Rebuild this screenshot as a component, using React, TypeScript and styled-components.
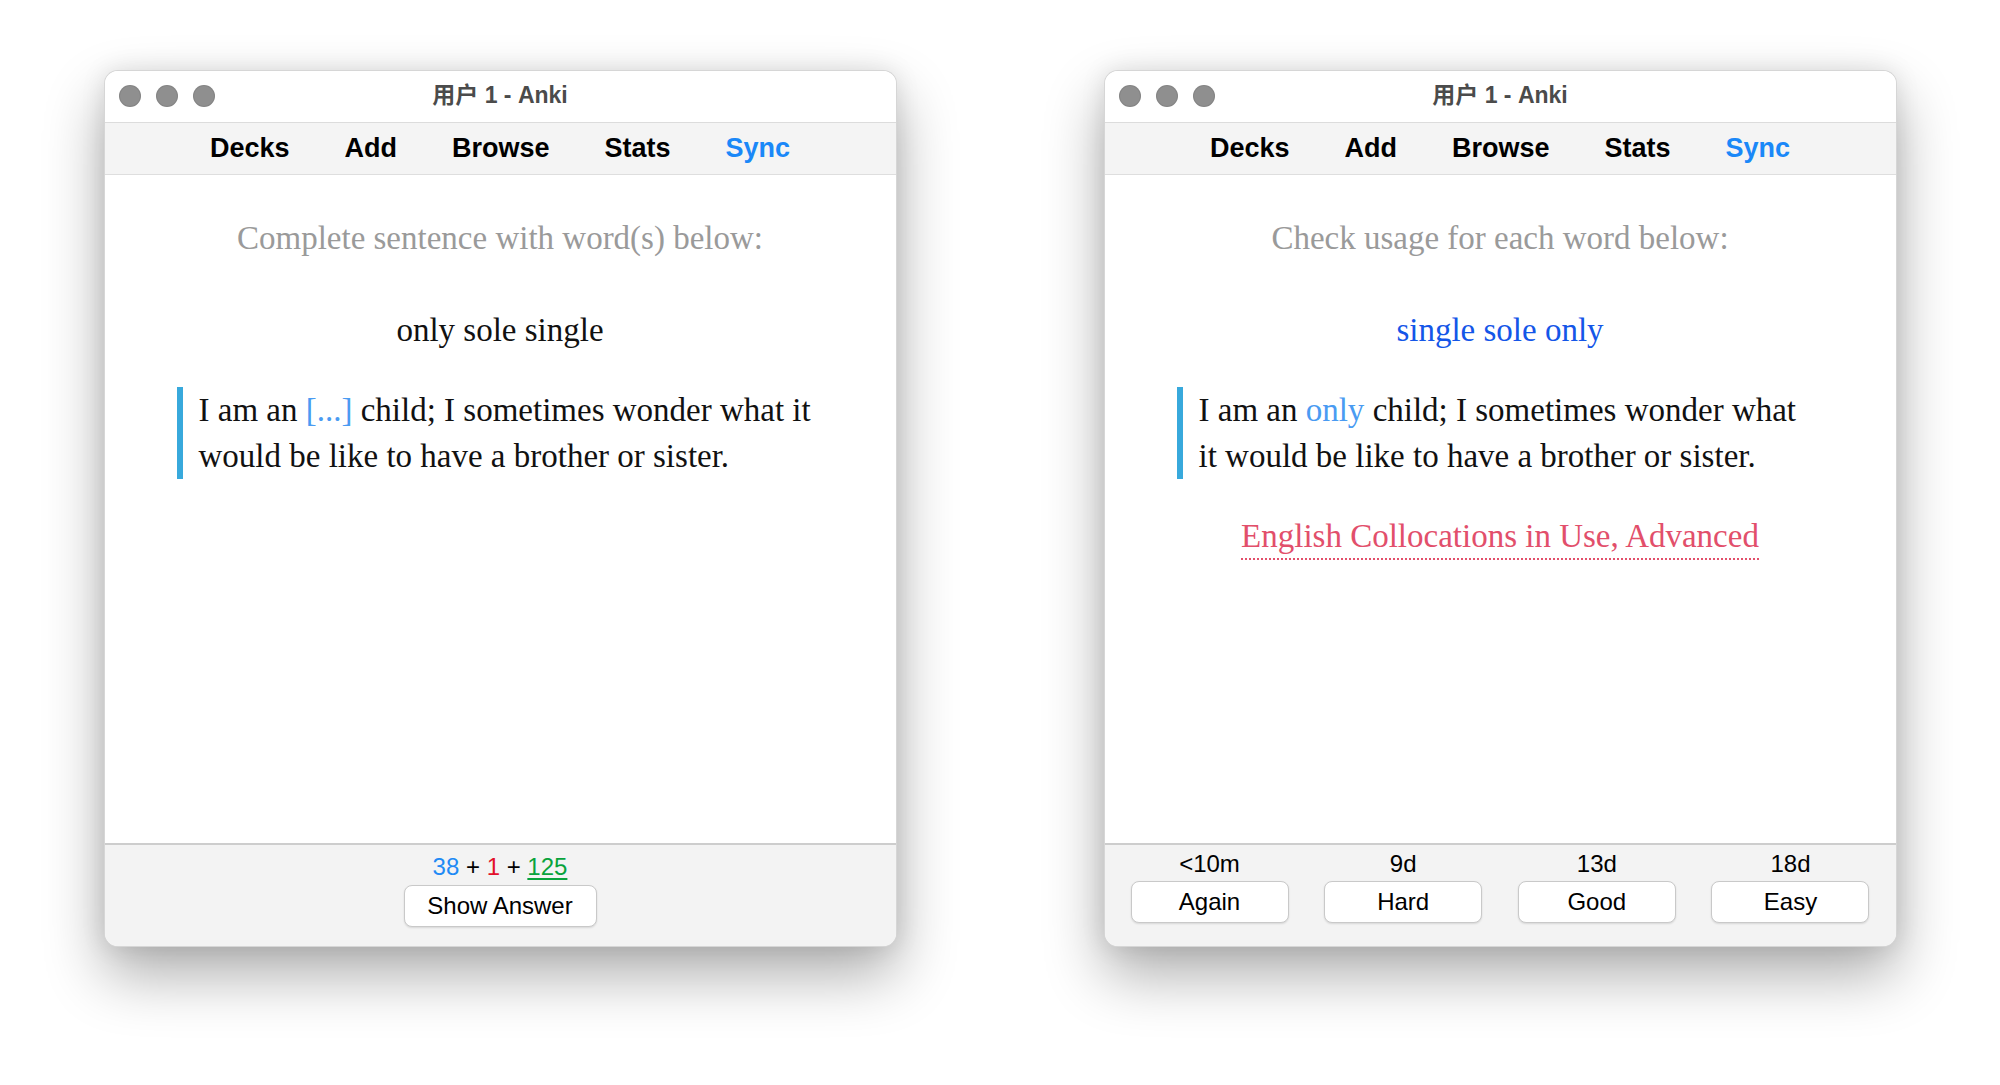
import React from "react";
import styled, { createGlobalStyle } from "styled-components";

const GlobalStyle = createGlobalStyle`
  html, body {
    margin: 0;
    padding: 0;
    background: #ffffff;
  }
  body {
    font-family: "Liberation Sans", Arial, sans-serif;
  }
`;

const Page = styled.div`
  width: 2000px;
  height: 1085px;
  box-sizing: border-box;
  padding-top: 70px;
  display: flex;
  justify-content: center;
  align-items: flex-start;
  gap: 207px;
  overflow: hidden;
`;

const Window = styled.div`
  width: 793px;
  height: 877px;
  box-sizing: border-box;
  display: flex;
  flex-direction: column;
  border-radius: 14px;
  overflow: hidden;
  background: #ffffff;
  border: 1px solid rgba(0, 0, 0, 0.16);
  box-shadow: 0 28px 60px rgba(0, 0, 0, 0.32), 0 0 24px rgba(0, 0, 0, 0.1);
`;

const TitleBar = styled.div`
  position: relative;
  height: 51px;
  flex: none;
  display: flex;
  align-items: center;
  justify-content: center;
  background: #ffffff;
  border-bottom: 1px solid #dcdcdc;
`;

const Lights = styled.div`
  position: absolute;
  left: 14px;
  top: 14px;
  display: flex;
  gap: 15px;
`;

const Light = styled.span`
  width: 22px;
  height: 22px;
  border-radius: 50%;
  background: #8f8f8f;
  box-shadow: inset 0 0 0 1px rgba(0, 0, 0, 0.08);
`;

const Title = styled.div`
  font-family: "Liberation Sans", "Noto Sans CJK SC", sans-serif;
  font-size: 23px;
  line-height: 28px;
  margin-bottom: 4px;
  font-weight: 700;
  color: #4b4b4b;
`;

const Toolbar = styled.nav`
  height: 51px;
  flex: none;
  display: flex;
  align-items: center;
  justify-content: center;
  gap: 55px;
  background: #f4f4f4;
  border-bottom: 1px solid #dedede;
`;

const NavItem = styled.span<{ $active?: boolean }>`
  font-family: "Liberation Sans", Arial, sans-serif;
  font-weight: 700;
  font-size: 27px;
  color: ${(p) => (p.$active ? "#1a88f8" : "#000000")};
`;

const Content = styled.main`
  flex: 1;
  display: flex;
  flex-direction: column;
  align-items: center;
  padding-top: 40px;
  font-family: "Liberation Serif", "Times New Roman", serif;
  font-size: 33px;
  line-height: 46px;
  color: #111111;
`;

const Prompt = styled.div`
  color: #9a9a9a;
  text-align: center;
`;

const Words = styled.div<{ $answer?: boolean }>`
  margin-top: 46px;
  color: ${(p) => (p.$answer ? "#1456e8" : "#111111")};
`;

const Quote = styled.blockquote`
  align-self: stretch;
  margin: 34px 0 0 72px;
  width: 640px;
  box-sizing: border-box;
  border-left: 6px solid #38a9dc;
  padding-left: 16px;
`;

const Cloze = styled.span`
  color: #4a9bf2;
`;

const Source = styled.div`
  margin-top: 35px;
  color: #e24f6b;
  border-bottom: 2px dotted #e24f6b;
  line-height: 44px;
`;

const BottomBar = styled.footer`
  height: 103px;
  flex: none;
  box-sizing: border-box;
  background: #f3f3f3;
  border-top: 2px solid #cdcdcd;
  display: flex;
  flex-direction: column;
  align-items: center;
`;

const Counts = styled.div`
  margin-top: 7px;
  font-size: 24px;
  line-height: 30px;
  color: #000;
`;

const Count = styled.span<{ $color: string; $underline?: boolean }>`
  color: ${(p) => p.$color};
  text-decoration: ${(p) => (p.$underline ? "underline" : "none")};
  text-underline-offset: 3px;
`;

const Button = styled.button`
  box-sizing: border-box;
  height: 42px;
  padding: 0 22px;
  font-family: "Liberation Sans", Arial, sans-serif;
  font-size: 24px;
  color: #000;
  background: #ffffff;
  border: 1px solid #c9c9c9;
  border-radius: 8px;
  box-shadow: 0 1px 2px rgba(0, 0, 0, 0.12);
`;

const ShowButton = styled(Button)`
  margin-top: 3px;
  width: 193px;
`;

const EaseRow = styled.div`
  align-self: stretch;
  display: grid;
  grid-template-columns: repeat(4, 158px);
  justify-content: space-between;
  padding: 5px 26px 0;
`;

const EaseCell = styled.div`
  display: flex;
  flex-direction: column;
  align-items: center;
  gap: 3px;
`;

const EaseLabel = styled.div`
  font-size: 24px;
  line-height: 28px;
  color: #000;
`;

const EaseButton = styled(Button)`
  width: 158px;
`;

const NAV = ["Decks", "Add", "Browse", "Stats", "Sync"];

function Chrome({ children }: { children: React.ReactNode }) {
  return (
    <Window>
      <TitleBar>
        <Lights>
          <Light />
          <Light />
          <Light />
        </Lights>
        <Title>用户 1 - Anki</Title>
      </TitleBar>
      <Toolbar>
        {NAV.map((n) => (
          <NavItem key={n} $active={n === "Sync"}>
            {n}
          </NavItem>
        ))}
      </Toolbar>
      {children}
    </Window>
  );
}

const EASE = [
  { time: "<10m", label: "Again" },
  { time: "9d", label: "Hard" },
  { time: "13d", label: "Good" },
  { time: "18d", label: "Easy" },
];

export default function App() {
  return (
    <>
      <GlobalStyle />
      <Page>
        <Chrome>
          <Content>
            <Prompt>Complete sentence with word(s) below:</Prompt>
            <Words>only sole single</Words>
            <Quote>
              I am an <Cloze>[...]</Cloze> child; I sometimes wonder what it
              would be like to have a brother or sister.
            </Quote>
          </Content>
          <BottomBar>
            <Counts>
              <Count $color="#1f8af5">38</Count> + <Count $color="#e3102b">1</Count> +{" "}
              <Count $color="#08a33c" $underline>
                125
              </Count>
            </Counts>
            <ShowButton>Show Answer</ShowButton>
          </BottomBar>
        </Chrome>
        <Chrome>
          <Content>
            <Prompt>Check usage for each word below:</Prompt>
            <Words $answer>single sole only</Words>
            <Quote>
              I am an <Cloze>only</Cloze> child; I sometimes wonder what it
              would be like to have a brother or sister.
            </Quote>
            <Source>English Collocations in Use, Advanced</Source>
          </Content>
          <BottomBar>
            <EaseRow>
              {EASE.map((e) => (
                <EaseCell key={e.label}>
                  <EaseLabel>{e.time}</EaseLabel>
                  <EaseButton>{e.label}</EaseButton>
                </EaseCell>
              ))}
            </EaseRow>
          </BottomBar>
        </Chrome>
      </Page>
    </>
  );
}
